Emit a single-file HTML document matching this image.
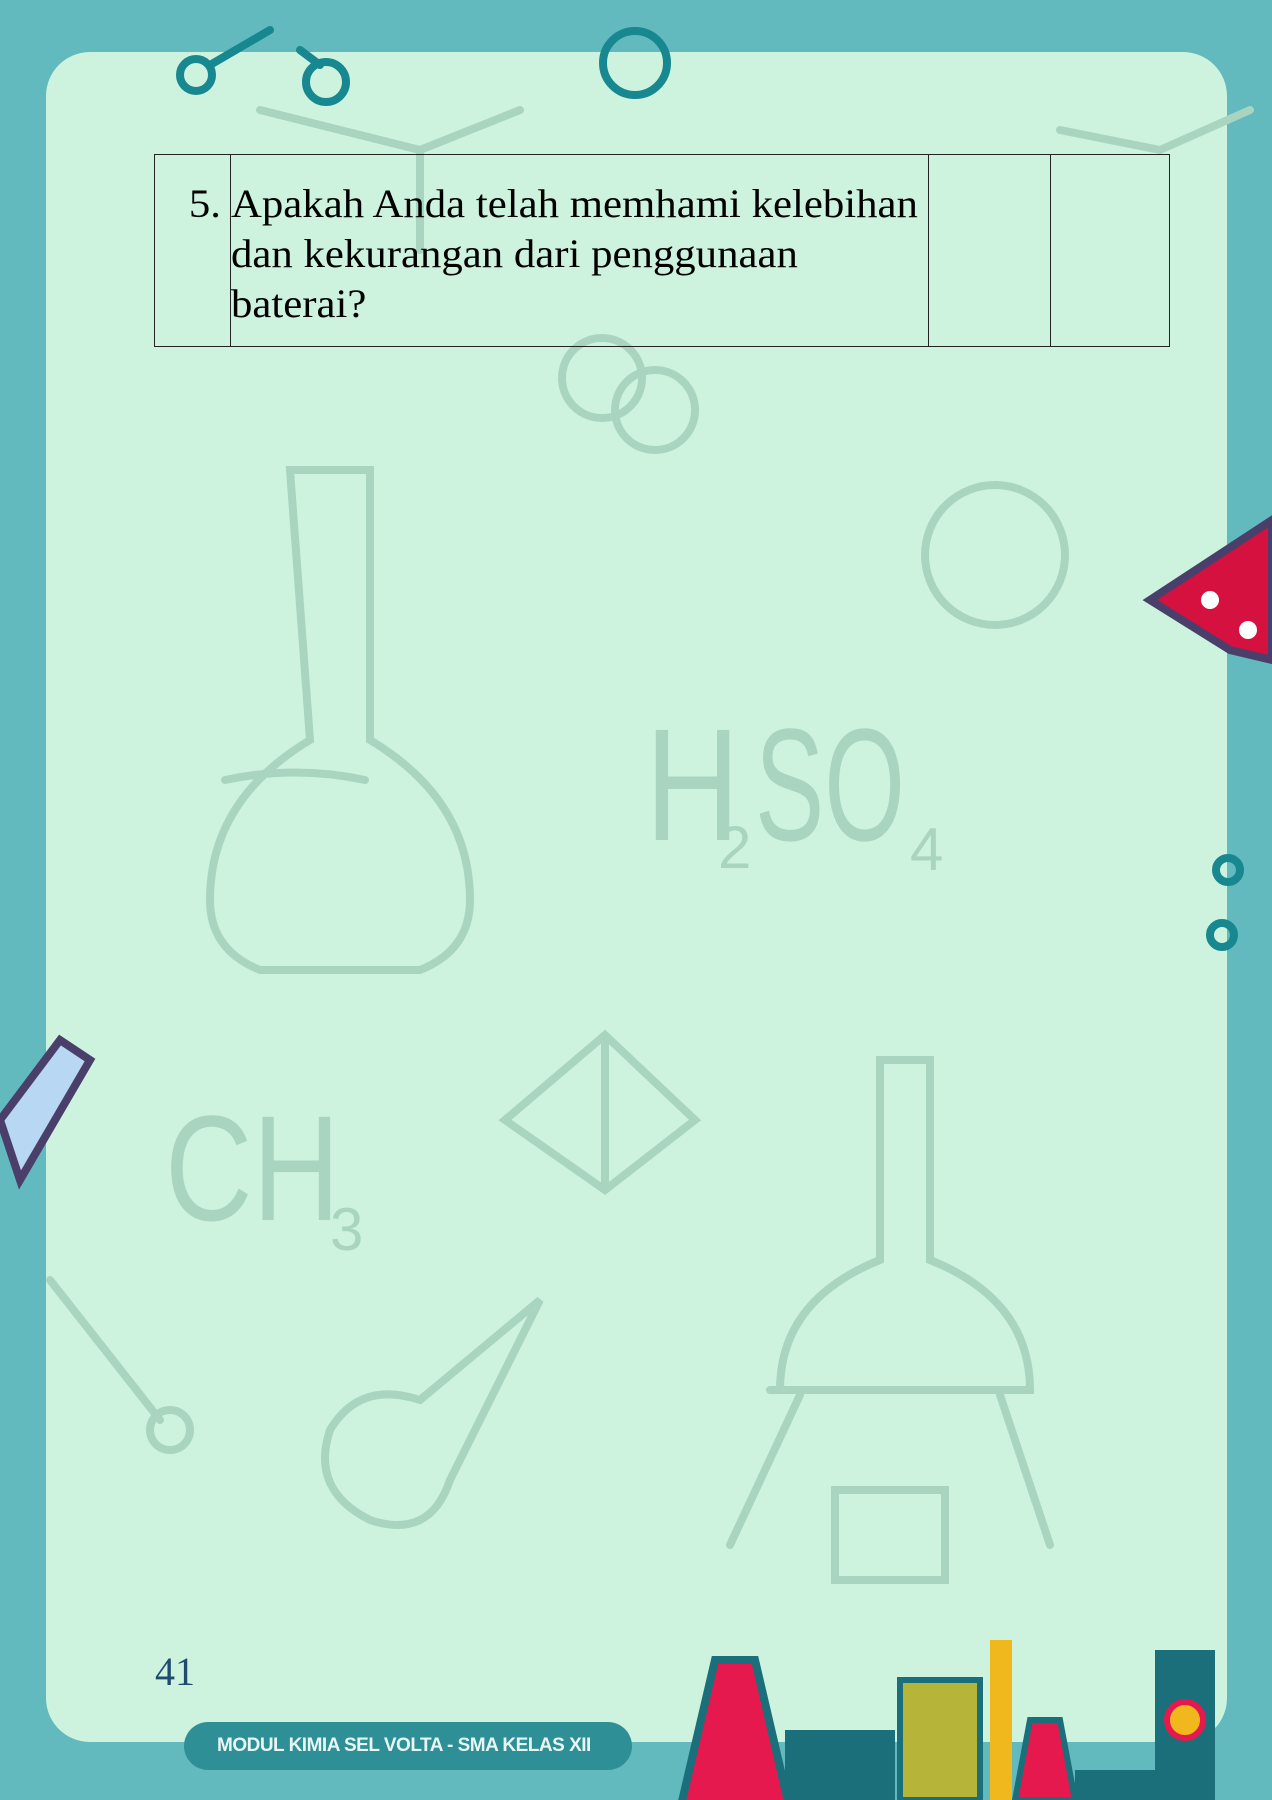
<!DOCTYPE html>
<html><head><meta charset="utf-8"><style>
html,body{margin:0;padding:0}
body{width:1272px;height:1800px;position:relative;overflow:hidden;background:#62b9be;font-family:"Liberation Serif",serif}
.panel{position:absolute;left:46px;top:52px;width:1181px;height:1690px;background:#cdf3df;border-radius:44px}
svg{position:absolute;left:0;top:0}
table{position:absolute;left:154px;top:154px;width:1016px;height:193px;border-collapse:collapse}
td{border:1.5px solid #222;vertical-align:top;padding:0;font-size:40px;line-height:50px;color:#000}
.q{display:inline-block;white-space:nowrap;transform:scaleX(1.07);transform-origin:0 0}
.n{display:inline-block;transform:scaleX(1.07);transform-origin:100% 0}
.num{position:absolute;left:155px;top:1648px;font-size:40px;color:#1f4b6e}
.pill{position:absolute;left:184px;top:1722px;width:448px;height:48px;border-radius:24px;background:#2e8f96;color:#e8f6f3;font:bold 19px "Liberation Sans",sans-serif;line-height:48px;text-indent:33px;letter-spacing:-0.5px}
</style></head><body>
<div class="panel"></div>
<svg width="1272" height="1800" fill="none" stroke-linecap="round">
<g stroke="#a9d5c0" stroke-width="8">
<path d="M290 470 h80 v270 q100 60 100 160 q0 50 -50 70 h-160 q-50 -20 -50 -70 q0 -100 100 -160z"/>
<path d="M225 780 q70 -15 140 0"/>
<circle cx="995" cy="555" r="70"/>
<path d="M605 1035 L505 1120 L605 1190 L695 1120z M605 1035 v155"/>
<path d="M880 1060 h50 v200 q100 40 100 130 h-250 q0 -90 100 -130z"/>
<path d="M770 1390 h250 M800 1395 l-70 150 M1000 1395 l50 150"/>
<path d="M835 1490 h110 v90 h-110z"/>
<path d="M50 1280 L160 1420"/><circle cx="170" cy="1430" r="20"/>
<path d="M540 1300 l-120 100 q-60 -20 -90 30 q-20 60 40 90 q60 20 80 -40z"/>
<circle cx="602" cy="378" r="40"/><circle cx="655" cy="410" r="40"/>
<path d="M260 110 L420 150 L520 110 M420 150 v100"/>
<path d="M1250 110 l-90 40 l-100 -20"/>
</g>
<g fill="#a9d5c0" font-family="Liberation Sans,sans-serif">
<text x="645" y="840" font-size="160" textLength="95" lengthAdjust="spacingAndGlyphs">H</text>
<text x="718" y="868" font-size="60">2</text>
<text x="755" y="840" font-size="160" textLength="150" lengthAdjust="spacingAndGlyphs">SO</text>
<text x="910" y="870" font-size="60">4</text>
<text x="165" y="1220" font-size="150" textLength="175" lengthAdjust="spacingAndGlyphs">CH</text>
<text x="330" y="1250" font-size="60">3</text>
</g>
<g stroke="#17888f" stroke-width="8">
<circle cx="635" cy="63" r="32"/><circle cx="196" cy="75" r="16"/><circle cx="326" cy="82" r="20"/>
<path d="M210 65 L270 30 M300 50 L320 65"/>
<circle cx="1228" cy="870" r="12"/><circle cx="1222" cy="935" r="12"/>
</g>
<path d="M1150 600 L1272 520 L1272 660 L1230 650z" fill="#d5123f" stroke="#4a3f6b" stroke-width="8"/>
<circle cx="1210" cy="600" r="9" fill="#fff"/><circle cx="1248" cy="630" r="9" fill="#fff"/>
<path d="M0 1120 L60 1040 L90 1060 L20 1180z" fill="#b8d7f3" stroke="#4a3f6b" stroke-width="8"/>
<g>
<path d="M715 1660 h40 l35 150 h-110z" fill="#e6194e" stroke="#1a6f7a" stroke-width="8"/>
<rect x="785" y="1730" width="110" height="70" fill="#1a6f7a"/>
<rect x="900" y="1680" width="80" height="120" fill="#b7b43a" stroke="#1a6f7a" stroke-width="6"/>
<rect x="990" y="1640" width="22" height="160" fill="#f1b81d"/>
<path d="M1030 1720 h30 l15 80 h-60z" fill="#e6194e" stroke="#1a6f7a" stroke-width="6"/>
<rect x="1155" y="1650" width="60" height="150" fill="#1a6f7a"/>
<circle cx="1185" cy="1720" r="18" fill="#f1b81d" stroke="#e6194e" stroke-width="6"/>
<rect x="1075" y="1770" width="80" height="30" fill="#1a6f7a"/>
</g>
</svg>
<table><tr>
<td style="width:66px;text-align:right;padding-right:9px;padding-top:24px"><span class="n">5.</span></td>
<td style="width:697px;padding-top:24px"><span class="q">Apakah Anda telah memhami kelebihan<br>dan kekurangan dari penggunaan<br>baterai?</span></td>
<td style="width:121px"></td><td></td>
</tr></table>
<div class="num">41</div>
<div class="pill">MODUL KIMIA SEL VOLTA - SMA KELAS XII</div>
</body></html>
